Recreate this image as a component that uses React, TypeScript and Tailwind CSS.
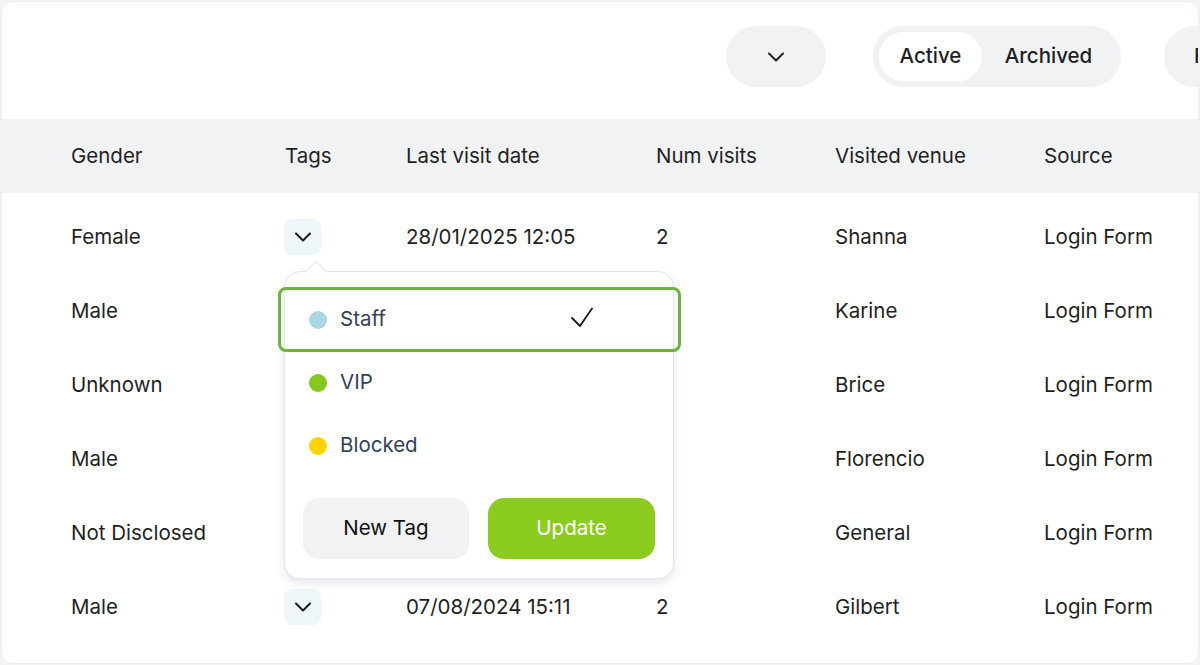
import { useState } from 'react';

type Row = { gender: string; date: string; visits: number; venue: string; source: string };

const ROWS: Row[] = [
  { gender: 'Female', date: '28/01/2025 12:05', visits: 2, venue: 'Shanna', source: 'Login Form' },
  { gender: 'Male', date: '', visits: 0, venue: 'Karine', source: 'Login Form' },
  { gender: 'Unknown', date: '', visits: 0, venue: 'Brice', source: 'Login Form' },
  { gender: 'Male', date: '', visits: 0, venue: 'Florencio', source: 'Login Form' },
  { gender: 'Not Disclosed', date: '', visits: 0, venue: 'General', source: 'Login Form' },
  { gender: 'Male', date: '07/08/2024 15:11', visits: 2, venue: 'Gilbert', source: 'Login Form' },
];

const TAGS = [
  { name: 'Staff', dot: 'bg-[#acd8e6]' },
  { name: 'VIP', dot: 'bg-[#84c71d]' },
  { name: 'Blocked', dot: 'bg-[#ffd200]' },
];

const COLS = 'grid grid-cols-[214px_121px_250px_179px_209px_1fr] pl-[69px] items-center';

function Chevron({ className = '' }: { className?: string }) {
  return (
    <svg viewBox="0 0 20 12" fill="none" stroke="currentColor" strokeWidth="2" strokeLinecap="round" strokeLinejoin="round" className={className}>
      <path d="M3 2.5l7 7 7-7" />
    </svg>
  );
}

function TagPopover() {
  const [selected, setSelected] = useState('Staff');
  return (
    <div className="absolute -left-[1px] top-[52px] z-10 w-[390px] h-[308px] bg-white rounded-[16px] border border-[#e3e7ee] shadow-[0_4px_10px_rgba(30,41,59,0.12)] px-[18px] pt-[16px] pb-[19px] flex flex-col">
      {/* arrow */}
      <div className="absolute left-[23px] -top-[8px] w-[16px] h-[16px] rotate-45 bg-white border-l border-t border-[#e3e7ee]" />
      <div className="flex flex-col -ml-[25px] -mr-[26px]">
        {TAGS.map(t => {
          const on = t.name === selected;
          return (
            <button
              key={t.name}
              onClick={() => setSelected(t.name)}
              className={`relative h-[65px] -my-[1px] flex items-center text-left rounded-[8px] border-[3px] ${on ? 'border-[#6db33f]' : 'border-transparent'}`}
            >
              <span className={`ml-[28px] w-[18px] h-[18px] rounded-full ${t.dot}`} />
              <span className="ml-[13px] text-[20.5px] text-[#334155] -mt-[1px]">{t.name}</span>
              {on && (
                <svg viewBox="0 0 24 20" fill="none" stroke="#1a1a1a" strokeWidth="1.8" strokeLinecap="round" strokeLinejoin="round" className="absolute left-[289px] top-[17px] w-[24px] h-[20px]">
                  <path d="M2 11l8 8L22 1.5" />
                </svg>
              )}
            </button>
          );
        })}
      </div>
      <div className="mt-auto flex gap-[19px]">
        <button className="w-[166px] h-[61px] rounded-[16px] bg-[#f1f2f4] text-[20.5px] text-[#111]">New Tag</button>
        <button className="w-[167px] h-[61px] rounded-[16px] bg-[#8ccc1f] text-[20.5px] text-white">Update</button>
      </div>
    </div>
  );
}

export default function App() {
  const [tab, setTab] = useState<'active' | 'archived'>('active');

  return (
    <div className="h-[665px] bg-[#f2f3f5] p-[1px] font-['Inter',sans-serif] text-[#1f1f1f]">
      <div className="h-full bg-white rounded-[12px] border border-[#eceef1] overflow-hidden flex flex-col">
        <div className="h-[117px] shrink-0 flex items-start pt-[24px] justify-end">
          <button className="w-[100px] h-[61px] rounded-full bg-[#f1f2f4] flex items-center justify-center">
            <Chevron className="w-[20px] h-[12px] text-[#222]" />
          </button>
          <div className="ml-[47px] w-[248px] h-[61px] rounded-full bg-[#f1f2f4] flex items-center px-[6px] text-[20.5px] font-medium">
            <button onClick={() => setTab('active')} className={`w-[103px] h-[49px] rounded-full ${tab === 'active' ? 'bg-white' : ''}`}>Active</button>
            <button onClick={() => setTab('archived')} className={`flex-1 h-[49px] rounded-full ${tab === 'archived' ? 'bg-white' : ''}`}>Archived</button>
          </div>
          <div className="ml-[43px] w-[80px] h-[61px] -mr-[46px] rounded-l-full bg-[#f1f2f4] flex items-center pl-[30px] text-[20.5px] font-medium overflow-hidden whitespace-nowrap">
            F
          </div>
        </div>

        <div className={`${COLS} h-[74px] bg-[#f1f2f4] text-[20.5px] shrink-0`}>
          <div>Gender</div>
          <div>Tags</div>
          <div>Last visit date</div>
          <div>Num visits</div>
          <div>Visited venue</div>
          <div>Source</div>
        </div>

        <div className="pt-[7px]">
          {ROWS.map((r, i) => (
            <div key={i} className={`${COLS} h-[74px] text-[20.5px]`}>
              <div>{r.gender}</div>
              <div className="relative">
                {(i === 0 || i === ROWS.length - 1) && (
                  <button className="w-[37px] h-[36px] -ml-[1px] rounded-[8px] bg-[#eff6f9] flex items-center justify-center">
                    <Chevron className="w-[20px] h-[12px] text-[#1a1a1a]" />
                  </button>
                )}
                {i === 0 && <TagPopover />}
              </div>
              <div>{r.date}</div>
              <div>{r.visits ? r.visits : ''}</div>
              <div>{r.venue}</div>
              <div>{r.source}</div>
            </div>
          ))}
        </div>
      </div>
    </div>
  );
}
